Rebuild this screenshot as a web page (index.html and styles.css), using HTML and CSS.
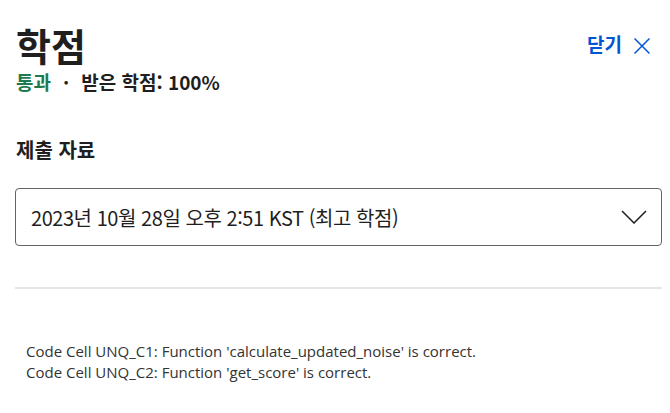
FILE: index.html
```html
<!DOCTYPE html>
<html lang="ko">
<head>
  <meta charset="UTF-8">
  <title>학점</title>
  <link rel="stylesheet" href="styles.css">
</head>
<body>
  <header class="grade-header">
    <div>
      <h1>학점</h1>
      <p class="grade-summary"><span class="passed">통과</span><span class="dot">·</span>받은 학점: 100%</p>
    </div>
    <button class="close-btn">닫기
      <svg width="16" height="16" viewBox="0 0 16 16"><path d="M0.5 0.5L15.5 15.5M15.5 0.5L0.5 15.5" stroke="#0056d2" stroke-width="1.5" fill="none"/></svg>
    </button>
  </header>

  <section class="submission">
    <h2>제출 자료</h2>
    <div class="select-box">
      <span>2023년 10월 28일 오후 2:51 KST (최고 학점)</span>
      <svg width="26" height="14" viewBox="0 0 26 14"><path d="M1 1L13 13L25 1" stroke="#1f1f1f" stroke-width="1.5" fill="none"/></svg>
    </div>
  </section>

  <hr class="divider">

  <div class="feedback">
    <p>Code Cell UNQ_C1: Function 'calculate_updated_noise' is correct.</p>
    <p>Code Cell UNQ_C2: Function 'get_score' is correct.</p>
  </div>
</body>
</html>
```

FILE: styles.css
```css
body {
  margin: 0;
  padding: 20px 8px 0 16px;
  font-family: "Noto Sans CJK KR", "Noto Sans", sans-serif;
  color: #1f1f1f;
  background: #ffffff;
}
.grade-header {
  display: flex;
  justify-content: space-between;
  align-items: flex-start;
}
h1 {
  margin: 0;
  font-size: 38px;
  line-height: 50px;
  font-weight: 700;
}
.grade-summary {
  margin: 0;
  font-size: 19px;
  line-height: 24px;
  font-weight: 700;
}
.passed {
  color: #1d7a4e;
}
.dot {
  margin: 0 12px;
}
.close-btn {
  display: flex;
  align-items: center;
  gap: 12px;
  margin-top: 10px;
  padding: 0 12px 0 0;
  background: none;
  border: none;
  color: #0056d2;
  font-family: "Noto Sans CJK KR", sans-serif;
  font-size: 19px;
  font-weight: 700;
  cursor: pointer;
}
.close-btn svg {
  margin-top: 5px;
}
.submission h2 {
  margin: 42px 0 24px;
  font-size: 20px;
  line-height: 28px;
  font-weight: 700;
}
.select-box {
  display: flex;
  justify-content: space-between;
  align-items: center;
  height: 56px;
  margin-left: -1px;
  padding: 0 14px 0 15px;
  border: 1px solid #636363;
  border-radius: 4px;
  font-size: 20px;
  letter-spacing: -0.45px;
}
.divider {
  margin: 41px 0 0 -1px;
  border: none;
  border-top: 2px solid #e5e5e5;
}
.feedback {
  padding: 52px 0 0 10px;
  font-family: "Open Sans", sans-serif;
  font-size: 15px;
  line-height: 21px;
  color: #333333;
}
.feedback p {
  margin: 0;
}
```
